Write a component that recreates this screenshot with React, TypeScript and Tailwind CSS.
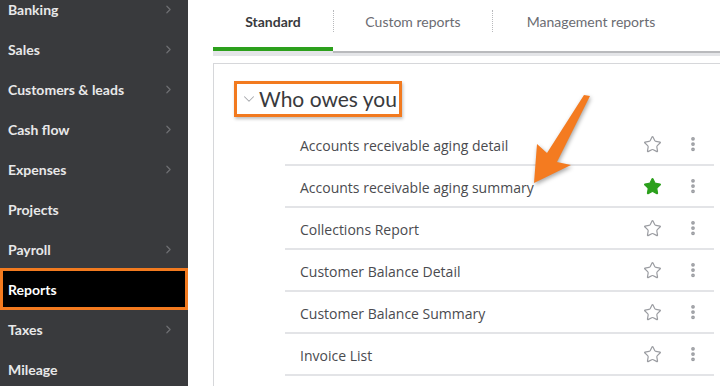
import { ChevronRight, ChevronDown, Star, EllipsisVertical } from 'lucide-react';

const navItems = [
  { label: 'Banking', arrow: true },
  { label: 'Sales', arrow: true },
  { label: 'Customers & leads', arrow: true },
  { label: 'Cash flow', arrow: true },
  { label: 'Expenses', arrow: true },
  { label: 'Projects', arrow: false },
  { label: 'Payroll', arrow: true },
  { label: 'Reports', arrow: false, active: true },
  { label: 'Taxes', arrow: true },
  { label: 'Mileage', arrow: false },
];

const reports = [
  { name: 'Accounts receivable aging detail', fav: false },
  { name: 'Accounts receivable aging summary', fav: true },
  { name: 'Collections Report', fav: false },
  { name: 'Customer Balance Detail', fav: false },
  { name: 'Customer Balance Summary', fav: false },
  { name: 'Invoice List', fav: false },
];

function Sidebar() {
  return (
    <div className="w-[188px] shrink-0 overflow-hidden bg-[#393a3d]">
      <ul className="-mt-[11px]">
        {navItems.map((item) =>
          item.active ? (
            <li
              key={item.label}
              className="-my-px flex h-[42px] items-center border-[3px] border-[#f27a1f] bg-black pl-[5px] text-[14px] font-bold text-white"
            >
              {item.label}
            </li>
          ) : (
            <li
              key={item.label}
              className="flex h-10 items-center justify-between pl-2 pr-[13px] text-[14px] font-bold text-[#e8e8e9]"
            >
              <span>{item.label}</span>
              {item.arrow && <ChevronRight size={13} strokeWidth={2.2} className="text-[#6e6f73]" />}
            </li>
          )
        )}
      </ul>
    </div>
  );
}

function Tabs() {
  return (
    <div className="ml-[25px]">
      <div className="flex h-[47px]">
        <div className="flex w-[120px] justify-center pt-[11px] text-[14px] font-bold text-[#393a3d]">Standard</div>
        <div className="mt-[10px] h-[22px] border-l border-dotted border-[#b8b9bc]" />
        <div className="flex w-[158px] justify-center pt-[11px] text-[14px] text-[#6b6c72]">Custom reports</div>
        <div className="mt-[10px] h-[22px] border-l border-dotted border-[#b8b9bc]" />
        <div className="flex w-[196px] justify-center pt-[11px] text-[14px] text-[#6b6c72]">Management reports</div>
      </div>
      <div className="flex">
        <div className="w-[120px]">
          <div className="h-1 bg-[#2ca01c]" />
          <div className="h-[5px] bg-[#e4e5e8]" />
        </div>
        <div className="flex-1">
          <div className="h-1 bg-white" />
          <div className="h-[2px] bg-[#b9babd]" />
          <div className="h-[3px] bg-[#e4e5e8]" />
        </div>
      </div>
    </div>
  );
}

function ReportRow({ name, fav }: { name: string; fav: boolean }) {
  return (
    <li className="flex h-[42px] items-center border-b-2 border-[#e3e4e7] pl-[15px] pr-[12px]">
      <span className="mt-[3px] flex-1 text-[14px] leading-5 text-[#4a4b4f]" style={{ fontFamily: '"Open Sans", Lato, sans-serif' }}>
        {name}
      </span>
      {fav ? (
        <Star size={19} strokeWidth={1.5} className="fill-[#2ca01c] text-[#2ca01c]" />
      ) : (
        <Star size={19} strokeWidth={1.5} className="text-[#9a9ca1]" />
      )}
      <EllipsisVertical size={18} strokeWidth={3} className="ml-[22px] text-[#9a9ca1]" />
    </li>
  );
}

export default function App() {
  return (
    <div className="relative flex h-[386px] w-[720px] overflow-hidden bg-white" style={{ fontFamily: 'Lato, "Open Sans", sans-serif' }}>
      <Sidebar />
      <div className="flex-1">
        <Tabs />
        <div className="ml-[25px] mt-[7px] h-full border-l border-t border-[#d6d7da] pt-[17px]">
          <div className="ml-[20px] inline-flex h-[36px] items-center border-[3px] border-[#f27a1f] pl-[3px] pr-[2px] shadow-[1px_2px_3px_rgba(0,0,0,0.25)]">
            <ChevronDown size={18} strokeWidth={1.4} className="text-[#a5a7ab]" />
            <span className="ml-[1px] text-[21px] text-[#393a3d]">Who owes you</span>
          </div>
          <ul className="ml-[71px] mr-[6px] mt-[7px]">
            {reports.map((r) => (
              <ReportRow key={r.name} name={r.name} fav={r.fav} />
            ))}
          </ul>
        </div>
      </div>
      <svg
        className="pointer-events-none absolute left-0 top-0 drop-shadow-[1px_2px_2px_rgba(0,0,0,0.35)]"
        width="720"
        height="386"
        viewBox="0 0 720 386"
      >
        <polygon
          points="534,183 537,144 547,153 584,95 590,96 557,162 571,165"
          fill="#f47b20"
        />
      </svg>
    </div>
  );
}
